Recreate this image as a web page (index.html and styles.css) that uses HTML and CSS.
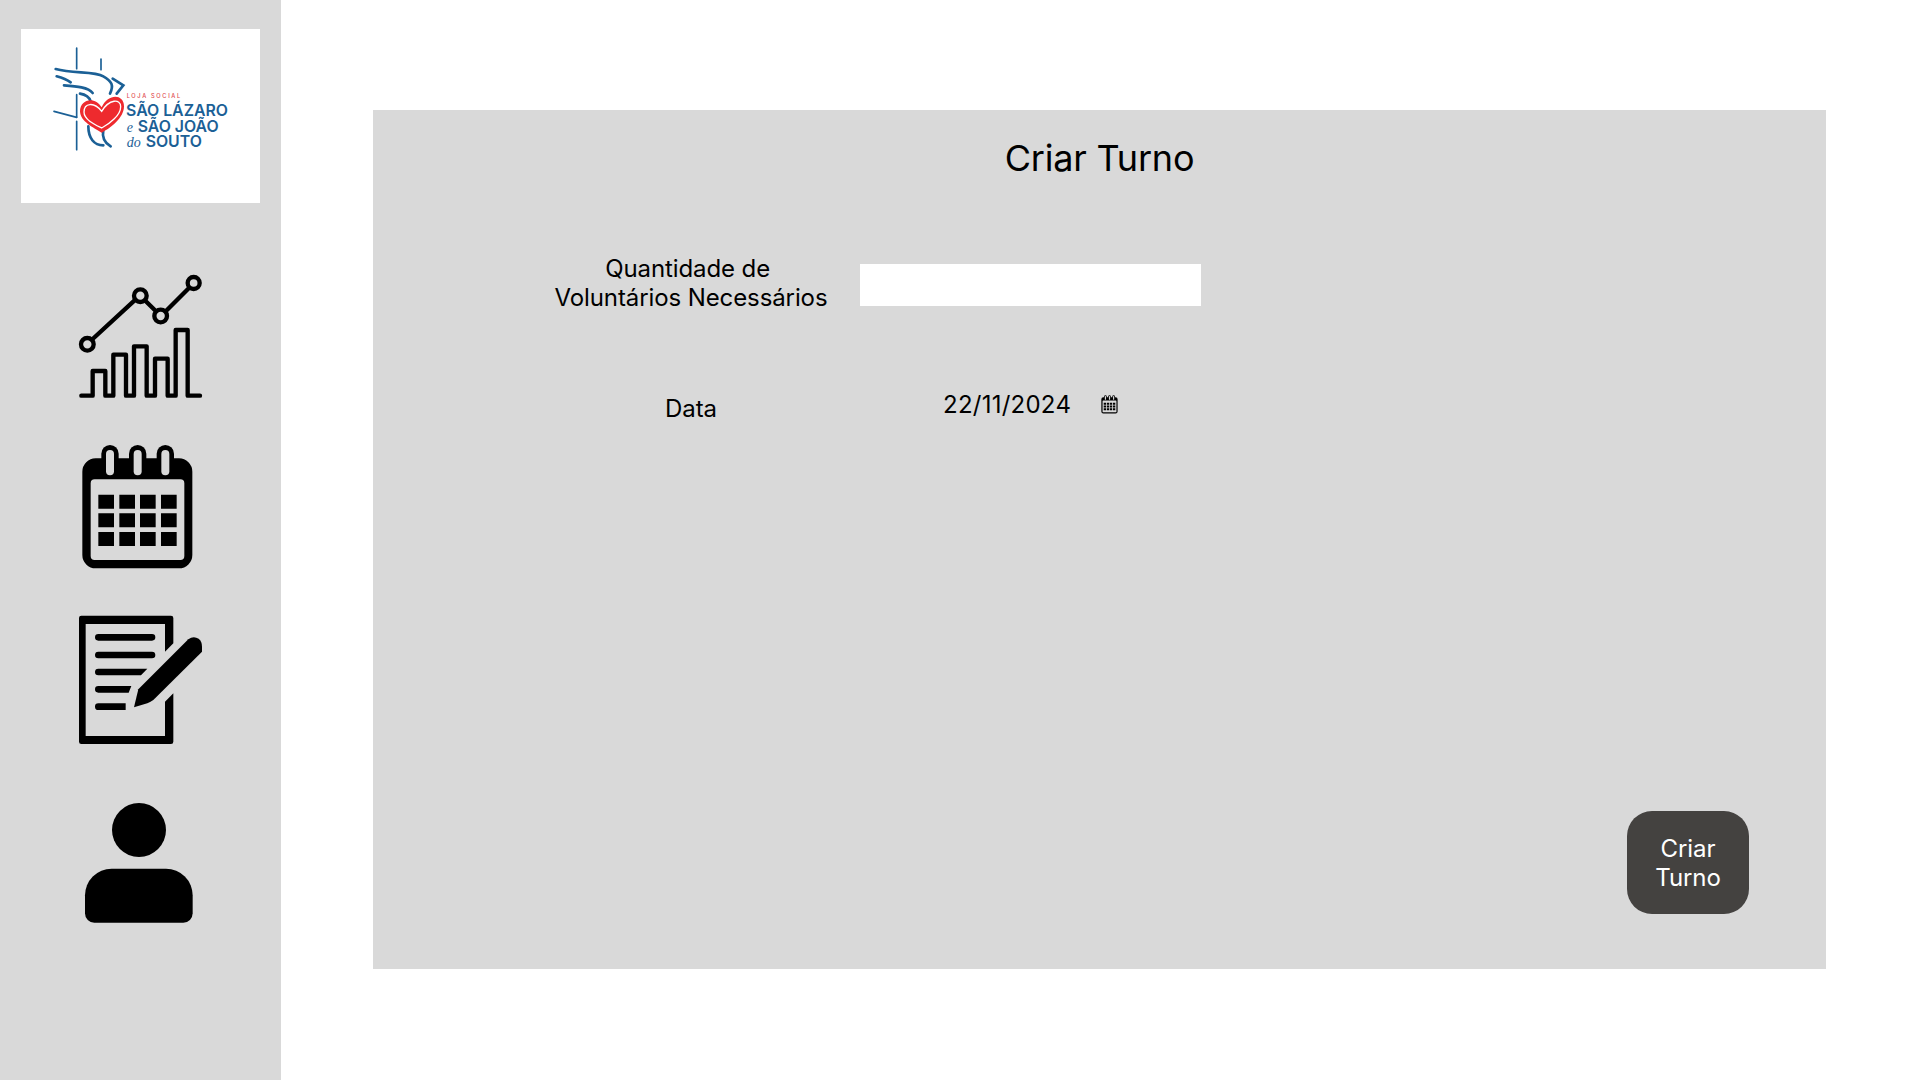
FILE: index.html
```html
<!DOCTYPE html>
<html lang="pt">
<head>
    <meta charset="UTF-8">
    <meta name="viewport" content="width=device-width, initial-scale=1.0">
    <title>Criar Turno</title>
    <link rel="stylesheet" href="styles.css">
</head>
<body>
    <!-- Calendário usado no menu e no campo da data -->
    <svg class="defs" aria-hidden="true">
        <symbol id="calendario" viewBox="60 552 345 378">
            <path fill-rule="evenodd" d="M107 595H357a40 40 0 0 1 40 40V885a40 40 0 0 1-40 40H107a40 40 0 0 1-40-40V635a40 40 0 0 1 40-40ZM104 658a12 12 0 0 0-12 12V888a12 12 0 0 0 12 12H361a12 12 0 0 0 12-12V670a12 12 0 0 0-12-12Z"/>
            <rect x="124" y="555" width="52" height="92" rx="26"/>
            <rect x="207" y="555" width="52" height="92" rx="26"/>
            <rect x="290" y="555" width="52" height="92" rx="26"/>
            <rect x="138" y="570" width="24" height="76" rx="12" fill="#d9d9d9"/>
            <rect x="221" y="570" width="24" height="76" rx="12" fill="#d9d9d9"/>
            <rect x="304" y="570" width="24" height="76" rx="12" fill="#d9d9d9"/>
            <path d="M115 704h47v42h-47ZM178 704h47v42h-47ZM240 704h47v42h-47ZM303 704h47v42h-47ZM115 760h47v42h-47ZM178 760h47v42h-47ZM240 760h47v42h-47ZM303 760h47v42h-47ZM115 816h47v42h-47ZM178 816h47v42h-47ZM240 816h47v42h-47ZM303 816h47v42h-47Z"/>
        </symbol>
    </svg>

    <div class="app">
        <!-- Barra lateral -->
        <aside class="sidebar">
            <div class="logo">
                <svg class="logo-svg" viewBox="3 6 717 519">
                    <g class="logo-lines">
                        <path d="M170 60V122M170 200V268M170 280V365M243 93V125"/>
                        <path d="M102 250L170 268"/>
                    </g>
                    <g class="logo-lines logo-wing">
                        <path d="M107 123C160 138 222 128 250 145C276 160 282 172 270 197"/>
                        <path d="M110 145C128 150 142 156 152 163"/>
                        <path d="M132 172C170 175 205 178 218 195"/>
                        <path d="M278 152L310 172L290 197"/>
                        <path d="M180 197C198 200 208 208 212 220"/>
                        <path d="M205 295C205 330 222 352 250 352"/>
                        <path d="M250 305C245 330 255 345 272 355"/>
                    </g>
                    <path class="heart" d="M245 238C225 203 180 213 180 250C180 280 222 300 245 314C272 300 312 270 312 235C312 198 265 195 245 238Z"/>
                    <path class="heart-line" d="M245 250C222 220 192 225 192 252C192 275 225 290 245 300C268 288 302 262 302 236C302 212 268 212 245 250Z"/>
                    <text class="logo-small" x="320" y="210">LOJA SOCIAL</text>
                    <text class="logo-big" x="318" y="265">SÃO LÁZARO</text>
                    <text class="logo-it" x="320" y="313">e</text>
                    <text class="logo-big" x="353" y="311">SÃO JOÃO</text>
                    <text class="logo-it" x="320" y="358">do</text>
                    <text class="logo-big" x="377" y="358">SOUTO</text>
                </svg>
            </div>

            <nav class="menu">
                <svg class="icon icon-grafico" viewBox="48 42 384 378">
                    <g class="chart-lines">
                        <path d="M64 407H98V333H136V407H160V284H198V407H222V259H260V407H285V296H323V407H347V210H383V407H420"/>
                        <path d="M98 237L223 122M256 122L288 154M318 153L387 84"/>
                        <circle cx="82" cy="253" r="19"/>
                        <circle cx="241" cy="107" r="19"/>
                        <circle cx="302" cy="168" r="19"/>
                        <circle cx="401" cy="69" r="18"/>
                    </g>
                </svg>
                <svg class="icon icon-calendario" viewBox="48 552 384 378"><use href="#calendario" x="60" y="552" width="345" height="378"/></svg>
                <svg class="icon icon-registos" viewBox="48 42 384 393">
                    <path d="M315 155V72H77V408H315V305L340 280V425a7 7 0 0 1-7 7H64a7 7 0 0 1-7-7V54a7 7 0 0 1 7-7H333a7 7 0 0 1 7 7V130Z"/>
                    <path d="M115 102H276a10 10 0 0 1 0 20H115a10 10 0 0 1 0-20ZM115 155H276a10 10 0 0 1 0 20H115a10 10 0 0 1 0-20ZM115 206H262L243 226H115a10 10 0 0 1 0-20ZM115 258H214L206 278H115a10 10 0 0 1 0-20ZM115 310H197V330H115a10 10 0 0 1 0-20Z"/>
                    <path d="M222 322L235 268L385 118Q400 106 416 116Q426 124 426 140V155L280 300Q272 306 262 310Z"/>
                </svg>
                <svg class="icon icon-perfil" viewBox="48 606 384 366">
                    <circle cx="237" cy="690" r="81"/>
                    <path d="M155 806H318a80 80 0 0 1 80 80V940a28 28 0 0 1-28 28H103a28 28 0 0 1-28-28V886a80 80 0 0 1 80-80Z"/>
                </svg>
            </nav>
        </aside>

        <!-- Formulário do turno -->
        <main class="content">
            <section class="panel">
                <h1 class="title">Criar Turno</h1>

                <form class="form">
                    <label class="field-label">Quantidade de&nbsp;<br>Voluntários Necessários</label>
                    <input class="field-input" type="text">

                    <label class="field-label field-label-data">Data</label>
                    <div class="field-date">
                        <span>22/11/2024</span>
                        <svg class="date-icon"><use href="#calendario"/></svg>
                    </div>
                </form>

                <button class="btn-criar" type="button">Criar<br>Turno</button>
            </section>
        </main>
    </div>
</body>
</html>
```

FILE: styles.css
```css
* {
    box-sizing: border-box;
}

body {
    margin: 0;
    background: #fff;
    color: #000;
    font-family: Inter, "Liberation Sans", sans-serif;
    overflow: hidden;
}

.defs {
    display: none;
}

.app {
    display: flex;
    height: 1080px;
}

/* Barra lateral */
.sidebar {
    width: 281px;
    flex-shrink: 0;
    padding: 29px 21px 0;
    background: #d9d9d9;
}

.logo {
    width: 239px;
    height: 174px;
    padding-top: 1px;
    background: #fff;
}

.logo-svg {
    display: block;
    width: 239px;
    height: 173px;
}

.logo-lines path {
    fill: none;
    stroke: #1b6096;
    stroke-width: 5;
    stroke-linecap: round;
}

.logo-wing path {
    stroke-width: 8;
}

.heart {
    fill: #ee2a2e;
}

.heart-line {
    fill: none;
    stroke: #fff;
    stroke-width: 4;
}

.logo-small {
    font-size: 17px;
    font-weight: 500;
    letter-spacing: 5px;
    fill: #e0474c;
}

.logo-big {
    font-size: 47.5px;
    font-weight: 600;
    fill: #1b6096;
}

.logo-it {
    font-family: "Liberation Serif", serif;
    font-size: 42px;
    font-style: italic;
    fill: #1b6096;
}

.menu {
    display: flex;
    flex-direction: column;
    gap: 44px;
    margin-top: 71px;
    padding-left: 55px;
}

.icon {
    display: block;
    width: 128px;
}

.icon-grafico {
    height: 126px;
}

.icon-calendario {
    height: 126px;
}

.icon-registos {
    height: 131px;
}

.icon-perfil {
    height: 122px;
    margin-top: 13px;
}

.chart-lines path,
.chart-lines circle {
    fill: none;
    stroke: #000;
    stroke-width: 13;
    stroke-linecap: round;
    stroke-linejoin: round;
}

/* Painel principal */
.content {
    flex: 1;
    padding: 110px 0 0 92px;
}

.panel {
    display: flex;
    flex-direction: column;
    width: 1453px;
    height: 859px;
    padding-top: 26px;
    background: #d9d9d9;
}

.title {
    margin: 0;
    font-size: 36px;
    font-weight: 400;
    line-height: 44px;
    letter-spacing: -0.2px;
    text-align: center;
}

.form {
    display: grid;
    grid-template-columns: 310px 341px;
    grid-template-rows: 58px 29px;
    column-gap: 14px;
    row-gap: 78px;
    margin-top: 74px;
    padding-left: 163px;
}

.field-label {
    font-size: 24px;
    line-height: 29px;
    letter-spacing: -0.1px;
    text-align: center;
}

.field-label-data {
    margin-top: 4px;
}

.field-input {
    width: 341px;
    height: 42px;
    margin-top: 10px;
    border: 0;
    background: #fff;
}

.field-date {
    display: flex;
    align-items: center;
    height: 29px;
    padding-left: 83px;
    font-size: 24px;
    line-height: 29px;
    letter-spacing: 0.25px;
}

.date-icon {
    width: 17px;
    height: 19px;
    margin-left: 30px;
}

.btn-criar {
    align-self: flex-end;
    width: 122px;
    height: 103px;
    margin-top: auto;
    margin-right: 77px;
    margin-bottom: 55px;
    border: 0;
    border-radius: 25px;
    background: #444240;
    color: #fff;
    font-family: inherit;
    font-size: 24px;
    line-height: 29px;
    letter-spacing: -0.1px;
}
```
